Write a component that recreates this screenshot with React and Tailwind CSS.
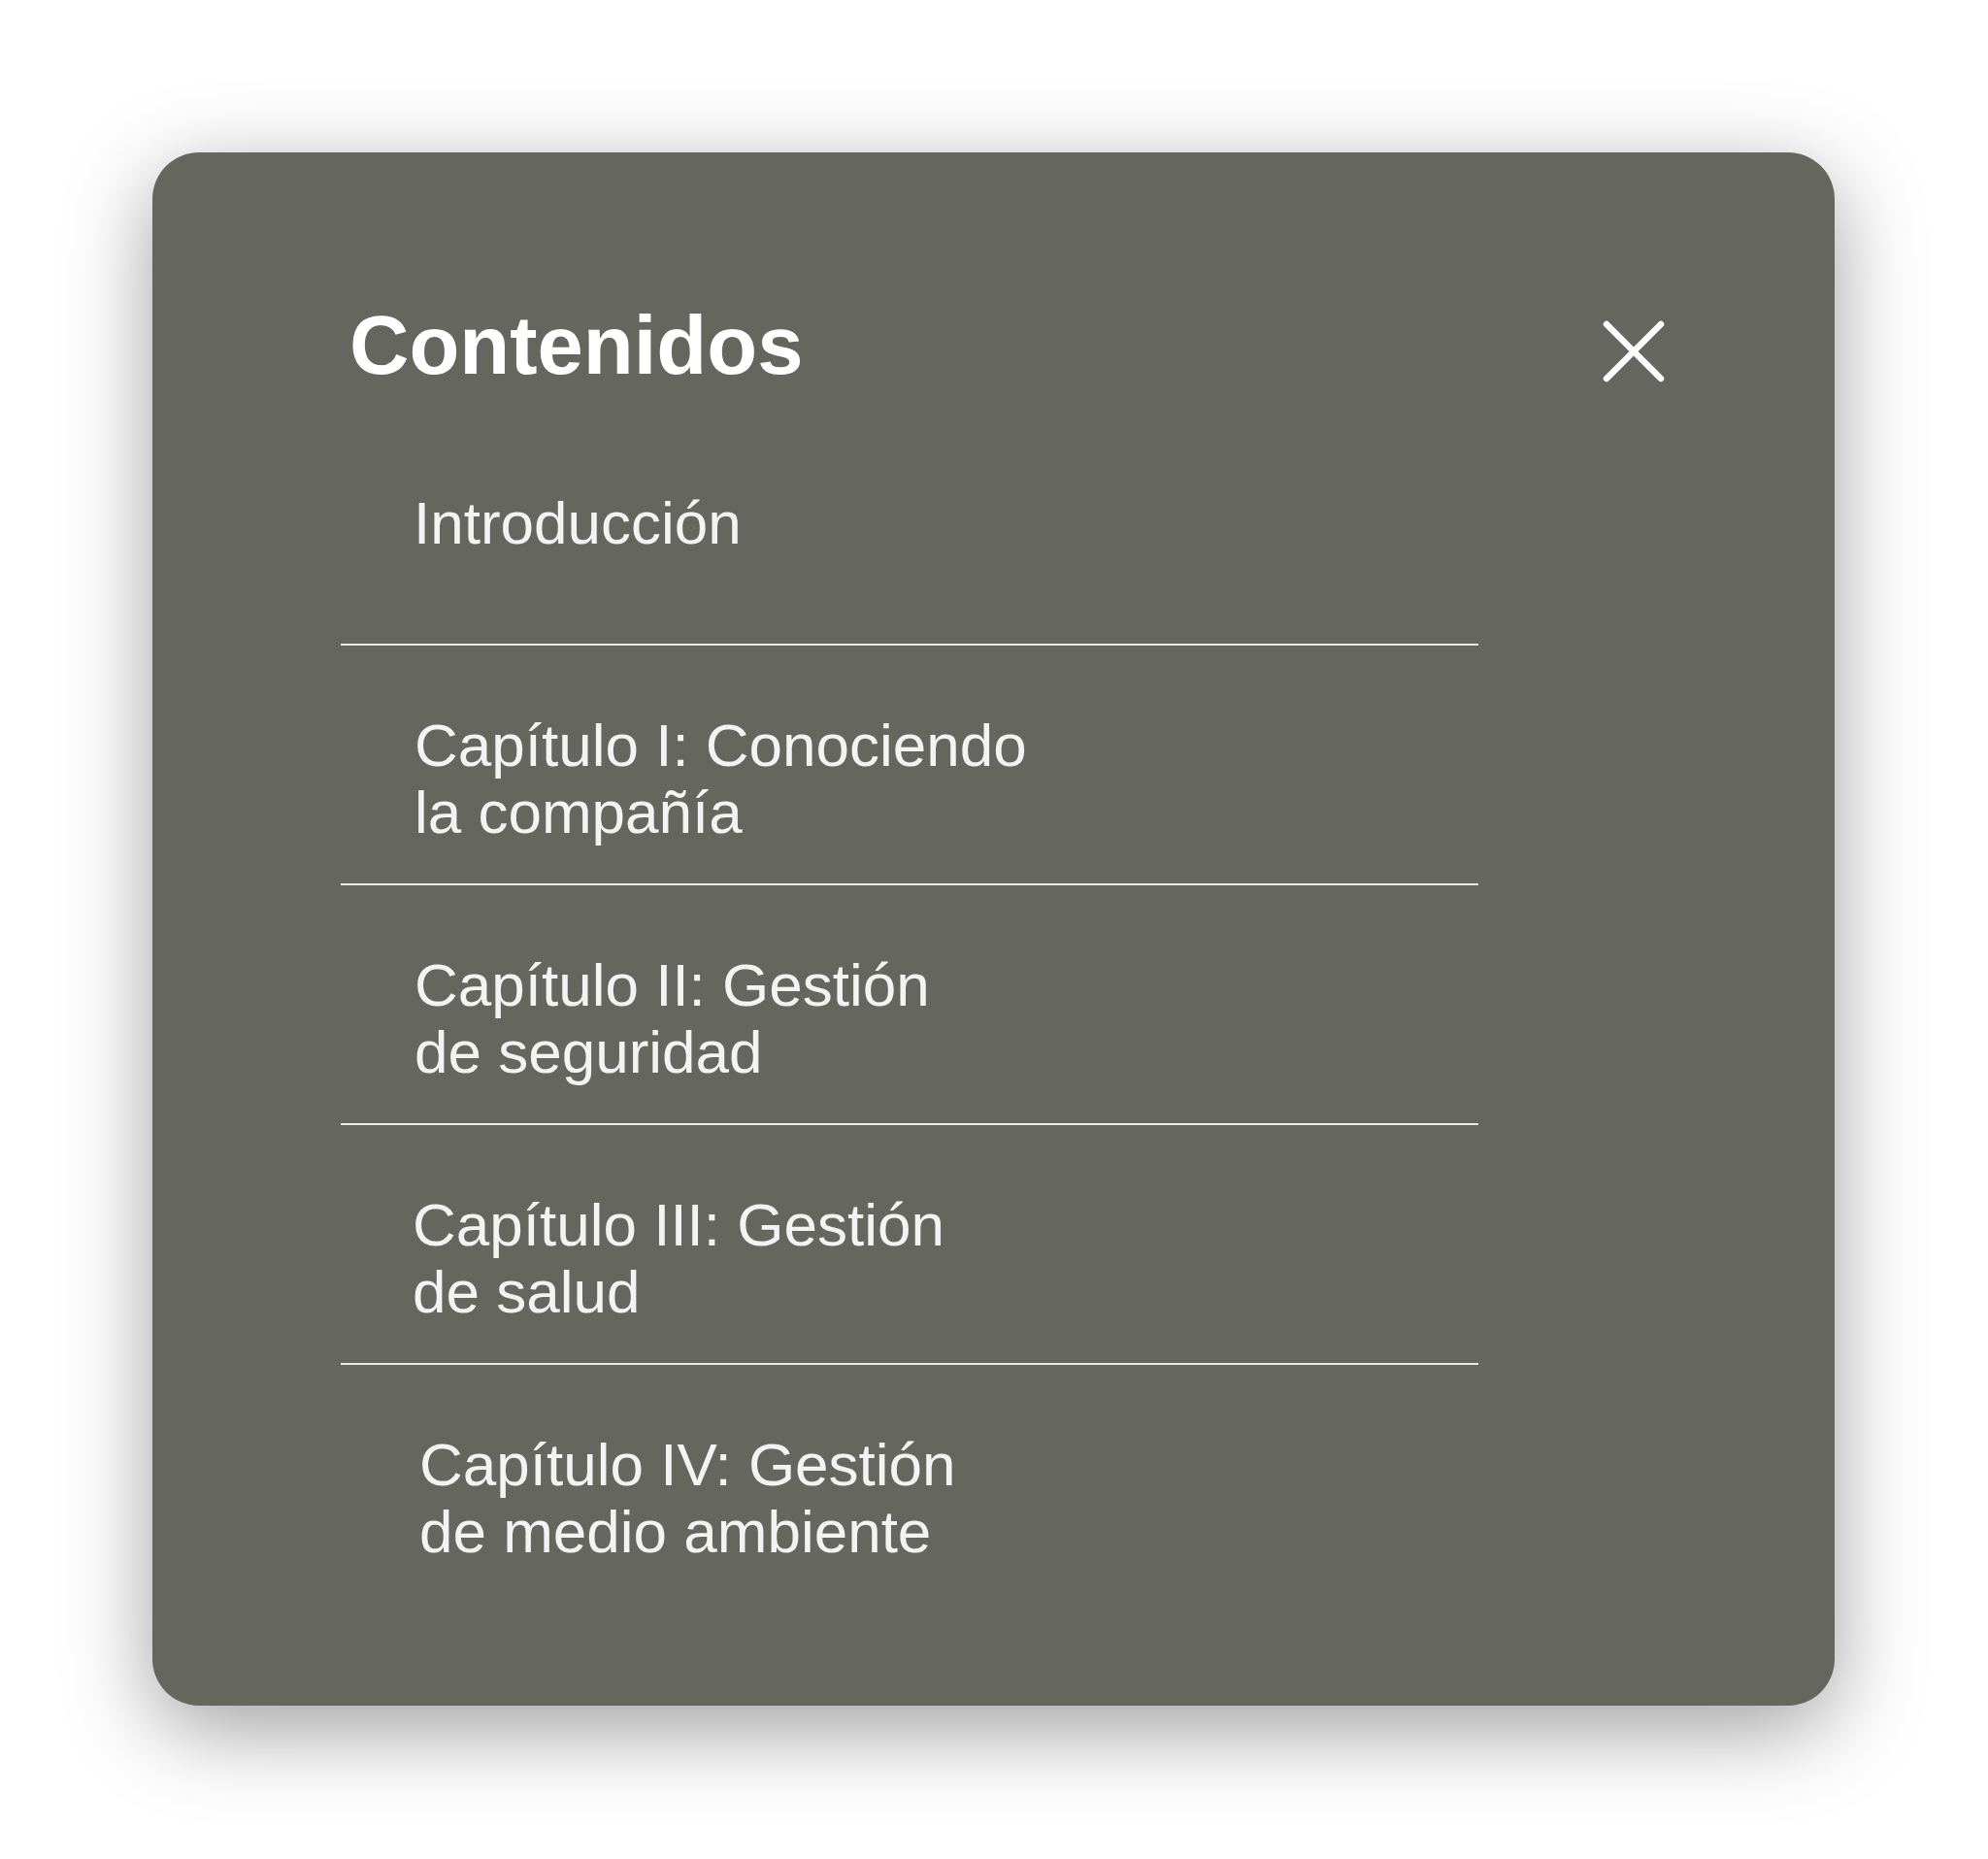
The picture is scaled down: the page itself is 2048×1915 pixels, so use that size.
const chapters = [
  { lines: ["Capítulo I: Conociendo", "la compañía"], indent: "pl-[76px]" },
  { lines: ["Capítulo II: Gestión", "de seguridad"], indent: "pl-[76px]" },
  { lines: ["Capítulo III: Gestión", "de salud"], indent: "pl-[74px]" },
  { lines: ["Capítulo IV: Gestión", "de medio ambiente"], indent: "pl-[81px]" },
];

const CloseIcon = () => (
  <svg width="64" height="64" viewBox="0 0 64 64" fill="none">
    <path
      d="M4 4 L60 60 M60 4 L4 60"
      stroke="currentColor"
      strokeWidth="6.5"
      strokeLinecap="round"
    />
  </svg>
);

export default function App() {
  return (
    <div
      className="w-[2048px] h-[1915px] bg-white pt-[157px] pl-[157px]"
      style={{ fontFamily: '"Liberation Sans", Arial, sans-serif' }}
    >
      <div className="w-[1733px] h-[1600px] rounded-[48px] bg-[#65675f] shadow-[0_24px_90px_rgba(0,0,0,0.38)]">
        {/* header */}
        <div className="flex items-start justify-between pt-[157px] pl-[203px] pr-[175px]">
          <h2 className="text-[85px] leading-[84px] font-bold text-white">
            Contenidos
          </h2>
          <button className="mt-[16px] flex items-center justify-center text-white">
            <CloseIcon />
          </button>
        </div>

        {/* list */}
        <div className="ml-[194px] w-[1172px] mt-[106px]">
          <div className="pl-[75px] pb-[90px] text-[62px] leading-[69px] text-[#f3f3f1]">
            Introducción
          </div>
          {chapters.map((ch, i) => (
            <div key={i} className="border-t-2 border-[#e9e9e6]">
              <div
                className={`${ch.indent} pt-[68px] pb-[39px] text-[62px] leading-[69px] text-[#f3f3f1]`}
              >
                {ch.lines.map((l) => (
                  <div key={l}>{l}</div>
                ))}
              </div>
            </div>
          ))}
        </div>
      </div>
    </div>
  );
}
